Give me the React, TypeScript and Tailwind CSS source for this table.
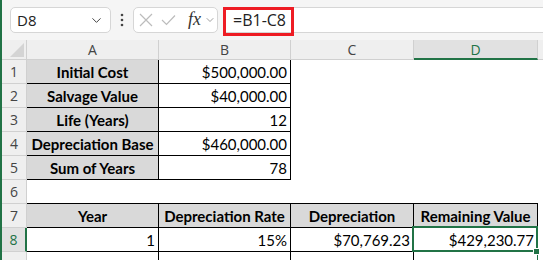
import React from "react";
import { ChevronDown } from "lucide-react";

type Cell = { t?: string; kind: "head" | "val" | "none"; border?: "full" | "bottom" | "none" };

const rows: Cell[][] = [
  [{ t: "Initial Cost", kind: "head", border: "full" }, { t: "$500,000.00", kind: "val", border: "full" }, { kind: "none" }, { kind: "none" }],
  [{ t: "Salvage Value", kind: "head", border: "full" }, { t: "$40,000.00", kind: "val", border: "full" }, { kind: "none" }, { kind: "none" }],
  [{ t: "Life (Years)", kind: "head", border: "full" }, { t: "12", kind: "val", border: "full" }, { kind: "none" }, { kind: "none" }],
  [{ t: "Depreciation Base", kind: "head", border: "full" }, { t: "$460,000.00", kind: "val", border: "full" }, { kind: "none" }, { kind: "none" }],
  [{ t: "Sum of Years", kind: "head", border: "full" }, { t: "78", kind: "val", border: "full" }, { kind: "none" }, { kind: "none" }],
  [{ kind: "none", border: "bottom" }, { kind: "none", border: "bottom" }, { kind: "none", border: "bottom" }, { kind: "none", border: "bottom" }],
  [{ t: "Year", kind: "head", border: "full" }, { t: "Depreciation Rate", kind: "head", border: "full" }, { t: "Depreciation", kind: "head", border: "full" }, { t: "Remaining Value", kind: "head", border: "full" }],
  [{ t: "1", kind: "val", border: "full" }, { t: "15%", kind: "val", border: "full" }, { t: "$70,769.23", kind: "val", border: "full" }, { t: "$429,230.77", kind: "val", border: "full" }],
];

function DataCell({ c, sel }: { c: Cell; sel?: boolean }) {
  const base = "relative h-[24px] flex items-center text-[15px] text-black font-['Lato','Liberation_Sans',sans-serif] leading-none";
  let cls = base;
  if (c.border === "full") cls += " border-r border-b border-black";
  else if (c.border === "bottom") cls += " border-b border-black";
  if (c.kind === "head") cls += " bg-[#d9d9d9] font-bold justify-center pt-[1px]";
  else if (c.kind === "val") cls += " bg-white justify-end pr-[3px] pt-[2px]";
  else cls += " bg-white";
  return (
    <div className={cls}>
      {c.t}
      {sel && (
        <>
          <div className="absolute -left-[2px] -top-[2px] w-[126px] h-[26px] border-2 border-[#217346] pointer-events-none" />
          <div className="absolute left-[119px] top-[20px] w-[7px] h-[7px] bg-[#217346] border border-white" />
        </>
      )}
    </div>
  );
}

export default function App() {
  const cols = ["A", "B", "C", "D"];
  return (
    <div className="w-[543px] h-[260px] overflow-hidden bg-white flex">
      <div className="w-[2px] h-full bg-[#217346] shrink-0" />
      <div className="flex-1 flex flex-col min-w-0">
        {/* Formula bar */}
        <div className="h-[40px] bg-[#f5f5f5] relative flex items-start pt-[7px] font-['Open_Sans','Noto_Sans',sans-serif] shrink-0">
          <div className="shrink-0 ml-[8px] w-[101px] h-[26px] bg-white border border-[#d6d6d6] rounded-[5px] flex items-center justify-between pl-[6px] pr-[6px]">
            <span className="text-[15px] text-[#222] leading-none">D8</span>
            <ChevronDown size={15} strokeWidth={1.6} className="text-[#444]" />
          </div>
          <div className="shrink-0 w-[22px] h-[26px] flex items-center justify-center">
            <svg width="4" height="14" viewBox="0 0 4 14"><circle cx="2" cy="2" r="1.3" fill="#444" /><circle cx="2" cy="7" r="1.3" fill="#444" /><circle cx="2" cy="12" r="1.3" fill="#444" /></svg>
          </div>
          <div className="shrink-0 w-[85px] h-[26px] bg-white border border-[#d6d6d6] rounded-[5px] flex items-center pl-[5px]">
            <svg width="14" height="14" viewBox="0 0 14 14" className="shrink-0">
              <path d="M1 1 L13 13 M13 1 L1 13" stroke="#bcbcbc" strokeWidth="1.2" fill="none" />
            </svg>
            <svg width="15" height="12" viewBox="0 0 15 12" className="shrink-0 ml-[8px]">
              <path d="M1 6 L5.5 10.5 L14 1.5" stroke="#bcbcbc" strokeWidth="1.2" fill="none" />
            </svg>
            <span className="shrink-0 font-['Liberation_Serif',serif] italic text-[18px] text-[#333] leading-none ml-[12px] -mt-[2px]">fx</span>
            <ChevronDown size={12} strokeWidth={1.4} className="shrink-0 text-[#777] ml-[3px]" />
          </div>
          <div className="ml-[5px] flex-1 h-[26px] bg-white border-y border-l border-[#d6d6d6] flex items-center pl-[9px]">
            <span className="text-[16px] text-[#222] leading-none">=B1-C8</span>
          </div>
          <div className="absolute left-[221px] top-[7px] w-[71px] h-[29px] border-[3px] border-[#ee1c24]" />
        </div>
        {/* Grid */}
        <div className="grid grid-cols-[25px_132px_132px_123px_124px_1fr] auto-rows-min font-['Open_Sans','Noto_Sans',sans-serif]">
          <div className="h-[20px] bg-[#efefef] border-r border-b border-[#d0d0d0] relative">
            <svg className="absolute right-[2px] bottom-[2px]" width="14" height="14" viewBox="0 0 14 14"><polygon points="14,0 14,14 0,14" fill="#d4d4d4" /></svg>
          </div>
          {cols.map((c) => (
            <div
              key={c}
              className={
                c === "D"
                  ? "h-[20px] bg-[#e1e1e1] border-r border-[#d0d0d0] border-b-2 border-b-[#217346] flex items-center justify-center text-[14px] text-[#217346]"
                  : "h-[20px] bg-[#efefef] border-r border-b border-[#d0d0d0] flex items-center justify-center text-[14px] text-[#444]"
              }
            >
              {c}
            </div>
          ))}
          <div className="h-[20px] bg-[#efefef] border-b border-[#d0d0d0]" />
          {rows.map((r, i) => (
            <React.Fragment key={i}>
              <div
                className={
                  i === 7
                    ? "h-[24px] bg-[#e1e1e1] border-b border-[#d0d0d0] border-r-2 border-r-[#217346] flex items-center justify-center text-[14px] text-[#217346]"
                    : "h-[24px] bg-[#efefef] border-r border-b border-[#d0d0d0] flex items-center justify-center text-[14px] text-[#444]"
                }
              >
                {i + 1}
              </div>
              {r.map((c, j) => (
                <DataCell key={j} c={c} sel={i === 7 && j === 3} />
              ))}
              <div className="h-[24px] bg-white" />
            </React.Fragment>
          ))}
          <div className="h-[24px] bg-[#efefef] border-r border-[#d0d0d0]" />
          <div className="h-[24px] border-r border-black" />
          <div className="h-[24px] border-r border-black" />
          <div className="h-[24px] border-r border-black" />
          <div className="h-[24px] border-r border-[#217346]" />
          <div className="h-[24px]" />
        </div>
      </div>
    </div>
  );
}
